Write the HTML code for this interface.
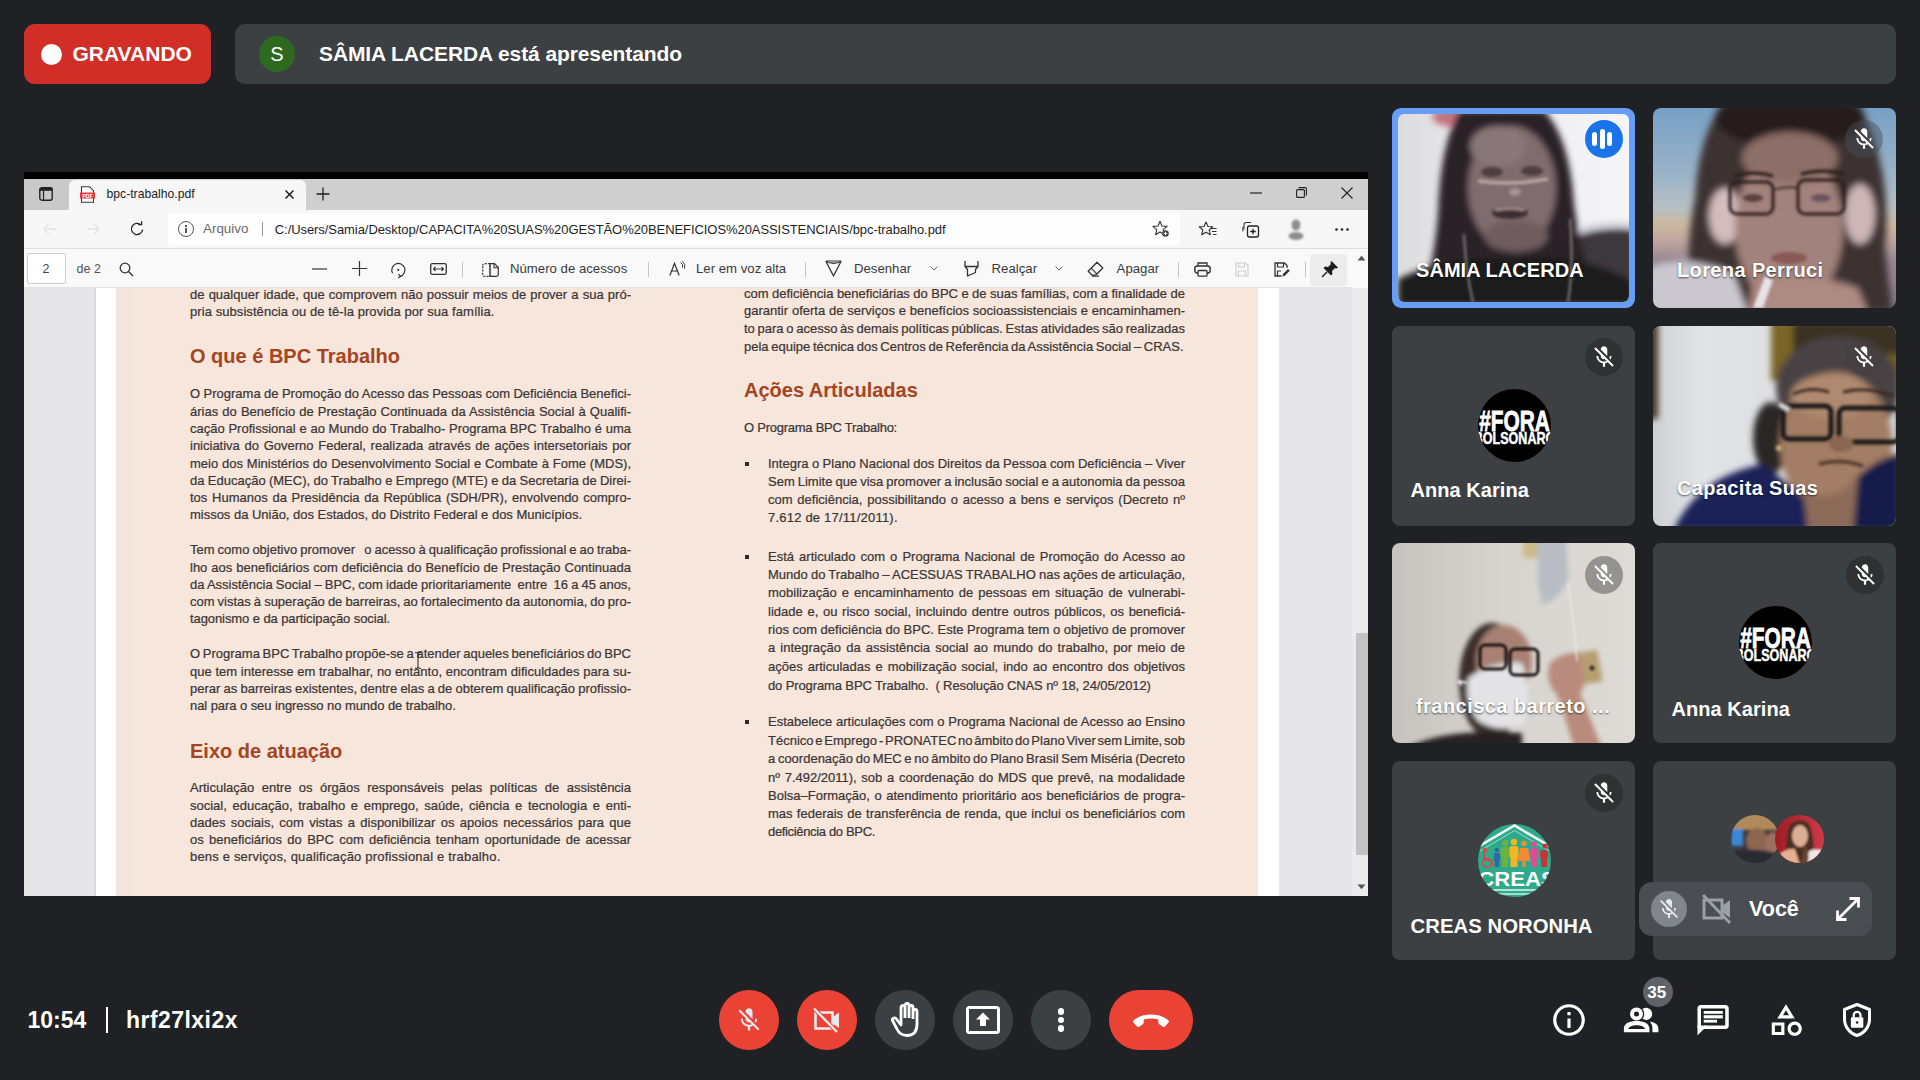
<!DOCTYPE html><html><head><meta charset="utf-8"><title>Meet</title><style>
*{box-sizing:border-box}
html,body{margin:0;padding:0}
body{width:1920px;height:1080px;background:#202124;position:relative;overflow:hidden;font-family:"Liberation Sans",sans-serif}
.a{position:absolute}
.t{position:absolute;white-space:nowrap}
.pl{-webkit-text-stroke:0.22px #3b3535}
svg{position:absolute;overflow:visible}
</style></head><body>
<div class="a" style="left:24px;top:24px;width:187px;height:60px;background:#d02e27;border-radius:11px"></div>
<div class="a" style="left:41px;top:44px;width:21px;height:21px;background:#fff;border-radius:50%"></div>
<div class="t " style="left:72.5px;top:43.42px;font-size:21px;line-height:21px;color:#fff;font-weight:700;">GRAVANDO</div>
<div class="a" style="left:235px;top:24px;width:1661px;height:60px;background:#3c4043;border-radius:10px"></div>
<div class="a" style="left:259px;top:36px;width:36px;height:36px;background:#2d6a1f;border-radius:50%"></div>
<div class="t " style="left:270.2px;top:44.07px;font-size:20px;line-height:20px;color:#fff;font-weight:400;">S</div>
<div class="t " style="left:319px;top:43.42px;font-size:21px;line-height:21px;color:#fff;font-weight:700;letter-spacing:-0.1px">SÂMIA LACERDA está apresentando</div>
<div class="a" style="left:24px;top:172px;width:1344px;height:724px;background:#e6e6e8;overflow:hidden">
</div>
<div class="a" style="left:24px;top:172px;width:1344px;height:7px;background:#000"></div>
<div class="a" style="left:24px;top:179px;width:1344px;height:31px;background:#cfcfcf"></div>
<div class="a" style="left:24px;top:179px;width:45px;height:31px;background:#c9c9c9;border-bottom-right-radius:4px"></div>
<div class="a" style="left:69px;top:180px;width:237px;height:40px;background:#f7f7f7;border-radius:6px 6px 0 0"></div>
<div class="a" style="left:24px;top:210px;width:1344px;height:38px;background:#f7f7f7"></div>
<div class="a" style="left:24px;top:248px;width:1344px;height:1px;background:#dedede"></div>
<div class="a" style="left:24px;top:249px;width:1344px;height:39px;background:#f9f9f9"></div>
<div class="a" style="left:24px;top:287px;width:1328px;height:1px;background:#e2e2e2"></div>
<svg style="left:39px;top:187px" width="14" height="14" viewBox="0 0 14 14"><rect x="0.8" y="0.8" width="12.4" height="12.4" rx="2" fill="none" stroke="#222" stroke-width="1.4"/><rect x="0.8" y="0.8" width="12.4" height="3" fill="#222"/><line x1="4.5" y1="3.5" x2="4.5" y2="13" stroke="#222" stroke-width="1.2"/></svg>
<svg style="left:80px;top:186px" width="15" height="17" viewBox="0 0 15 17"><path d="M1.5 0.7h8l4 4v11.6h-12z" fill="#fff" stroke="#333" stroke-width="1.1"/><rect x="0" y="6.5" width="15" height="6" fill="#e8383d"/><text x="7.5" y="11.6" font-size="5" font-family="Liberation Sans" font-weight="700" fill="#fff" text-anchor="middle">PDF</text></svg>
<div class="t " style="left:106.5px;top:188.17px;font-size:12.2px;line-height:12.2px;color:#222;font-weight:400;">bpc-trabalho.pdf</div>
<svg style="left:285px;top:190px" width="9" height="9" viewBox="0 0 9 9"><path d="M0.5 0.5L8.5 8.5M8.5 0.5L0.5 8.5" stroke="#111" stroke-width="1.4"/></svg>
<svg style="left:316px;top:187px" width="14" height="14" viewBox="0 0 14 14"><path d="M7 0.5V13.5M0.5 7H13.5" stroke="#222" stroke-width="1.3"/></svg>
<svg style="left:1250px;top:192px" width="12" height="2" viewBox="0 0 12 2"><path d="M0 1H12" stroke="#222" stroke-width="1.2"/></svg>
<svg style="left:1296px;top:187px" width="11" height="11" viewBox="0 0 11 11"><rect x="0.6" y="2.6" width="7.8" height="7.8" rx="1" fill="none" stroke="#222" stroke-width="1.1"/><path d="M2.6 0.6H9.4a1 1 0 0 1 1 1V8.4" fill="none" stroke="#222" stroke-width="1.1"/></svg>
<svg style="left:1341px;top:187px" width="12" height="12" viewBox="0 0 12 12"><path d="M0.5 0.5L11.5 11.5M11.5 0.5L0.5 11.5" stroke="#222" stroke-width="1.1"/></svg>
<div class="a" style="left:168px;top:213px;width:1012px;height:32px;background:#fefefe;border-radius:4px"></div>
<svg style="left:43px;top:223px" width="14" height="12" viewBox="0 0 14 12"><path d="M1 6H13M6 1L1 6L6 11" fill="none" stroke="#e3e3e3" stroke-width="1.3"/></svg>
<svg style="left:86px;top:223px" width="14" height="12" viewBox="0 0 14 12"><path d="M1 6H13M8 1L13 6L8 11" fill="none" stroke="#e3e3e3" stroke-width="1.3"/></svg>
<svg style="left:129px;top:221px" width="16" height="16" viewBox="0 0 16 16"><path d="M13.6 8.5A5.6 5.6 0 1 1 11.9 3.9" fill="none" stroke="#222" stroke-width="1.3"/><path d="M9.2 3.6L12.6 3.6L12.6 0.3" fill="none" stroke="#222" stroke-width="1.3"/></svg>
<div class="a" style="left:178px;top:221px;width:16px;height:16px;border:1.2px solid #555;border-radius:50%"></div>
<div class="a" style="left:185.4px;top:225px;width:1.4px;height:1.5px;background:#555"></div>
<div class="a" style="left:185.4px;top:227.5px;width:1.4px;height:5.5px;background:#555"></div>
<div class="t " style="left:203px;top:222.16px;font-size:13.4px;line-height:13.4px;color:#6b6b6b;font-weight:400;">Arquivo</div>
<div class="a" style="left:262px;top:222px;width:1px;height:14px;background:#9a9a9a"></div>
<div class="t " style="left:274.8px;top:222.50px;font-size:13px;line-height:13px;color:#1f1f1f;font-weight:400;letter-spacing:-0.07px">C:/Users/Samia/Desktop/CAPACITA%20SUAS%20GESTÃO%20BENEFICIOS%20ASSISTENCIAIS/bpc-trabalho.pdf</div>
<svg style="left:1152px;top:220px" width="18" height="18" viewBox="0 0 18 18"><path d="M8 1.2L10 6l5.1.4-3.9 3.3 1.2 5-4.4-2.7-4.4 2.7 1.2-5L.9 6.4 6 6z" fill="none" stroke="#333" stroke-width="1.1" stroke-linejoin="round"/><circle cx="13.5" cy="13.5" r="3.3" fill="#444"/><path d="M13.5 11.8V15.2M11.8 13.5H15.2" stroke="#fff" stroke-width="1"/></svg>
<svg style="left:1199px;top:221px" width="18" height="16" viewBox="0 0 18 16"><path d="M7 1L9 5.5l4.8.4-3.6 3.1 1.1 4.7L7 11.2l-4.3 2.5 1.1-4.7L.2 5.9 5 5.5z" fill="none" stroke="#333" stroke-width="1.1" stroke-linejoin="round"/><path d="M12 7.5H17.5M13 10.5H17.5M14 13.5H17.5" stroke="#333" stroke-width="1.1"/></svg>
<svg style="left:1242px;top:220px" width="18" height="18" viewBox="0 0 18 18"><path d="M2 9.5V4.5a2 2 0 0 1 2-2h5" fill="none" stroke="#333" stroke-width="1.1"/><path d="M0.8 11.5V7" fill="none" stroke="#333" stroke-width="1"/><rect x="5.5" y="6" width="11" height="11" rx="2" fill="none" stroke="#222" stroke-width="1.3"/><path d="M11 8.7V14.3M8.2 11.5H13.8" stroke="#222" stroke-width="1.3"/></svg>
<svg style="left:1284px;top:217px" width="24" height="24" viewBox="0 0 24 24"><defs><filter id="pb"><feGaussianBlur stdDeviation="1"/></filter></defs><g filter="url(#pb)"><ellipse cx="12" cy="8" rx="4.5" ry="5.5" fill="#8e8e8e"/><ellipse cx="12" cy="19" rx="7.5" ry="4" fill="#8e8e8e"/></g></svg>
<svg style="left:1335px;top:228px" width="14" height="3" viewBox="0 0 14 3"><circle cx="1.5" cy="1.5" r="1.3" fill="#222"/><circle cx="7" cy="1.5" r="1.3" fill="#222"/><circle cx="12.5" cy="1.5" r="1.3" fill="#222"/></svg>
<div class="a" style="left:27px;top:253px;width:39px;height:31px;background:#fff;border:1px solid #cfcfcf;border-radius:2px"></div>
<div class="t " style="left:42.5px;top:262.92px;font-size:12.5px;line-height:12.5px;color:#444;font-weight:400;">2</div>
<div class="t " style="left:76.5px;top:262.92px;font-size:12.5px;line-height:12.5px;color:#555;font-weight:400;">de 2</div>
<svg style="left:119px;top:262px" width="15" height="15" viewBox="0 0 15 15"><circle cx="6" cy="6" r="4.8" fill="none" stroke="#333" stroke-width="1.3"/><path d="M9.5 9.5L14 14" stroke="#333" stroke-width="1.4"/></svg>
<svg style="left:312px;top:268px" width="15" height="2" viewBox="0 0 15 2"><path d="M0 1H15" stroke="#333" stroke-width="1.2"/></svg>
<svg style="left:352px;top:261px" width="15" height="15" viewBox="0 0 15 15"><path d="M7.5 0V15M0 7.5H15" stroke="#333" stroke-width="1.2"/></svg>
<svg style="left:390px;top:262px" width="17" height="16" viewBox="0 0 17 16"><path d="M2.6 11.2A6.6 6.6 0 1 1 10.2 14.4" fill="none" stroke="#333" stroke-width="1.2"/><path d="M8.4 12.2L10.6 14.5L8.2 16" fill="none" stroke="#333" stroke-width="1.2"/><circle cx="8.3" cy="7.8" r="1.1" fill="#333"/></svg>
<svg style="left:430px;top:263px" width="17" height="12" viewBox="0 0 17 12"><rect x="0.7" y="0.7" width="15.6" height="10.6" rx="1.5" fill="none" stroke="#333" stroke-width="1.3"/><path d="M3.5 6H13.5M5.5 4L3.5 6L5.5 8M11.5 4L13.5 6L11.5 8" fill="none" stroke="#333" stroke-width="1.1"/></svg>
<div class="a" style="left:462.4px;top:262px;width:1px;height:15px;background:#c4c4c4"></div>
<div class="a" style="left:647.5px;top:262px;width:1px;height:15px;background:#c4c4c4"></div>
<div class="a" style="left:805.3px;top:262px;width:1px;height:15px;background:#c4c4c4"></div>
<div class="a" style="left:1178.2px;top:262px;width:1px;height:15px;background:#c4c4c4"></div>
<div class="a" style="left:1305.4px;top:262px;width:1px;height:15px;background:#c4c4c4"></div>
<svg style="left:482px;top:263px" width="17" height="14" viewBox="0 0 17 14"><path d="M0.7 3.3V11.5a1.8 1.8 0 0 0 1.8 1.8H8V0.7H2.5a1.8 1.8 0 0 0-1.8 1.8" fill="none" stroke="#333" stroke-width="1.2" stroke-dasharray="2 1.2"/><path d="M8 0.7H12.5L16.3 4.5V11.5a1.8 1.8 0 0 1-1.8 1.8H8z" fill="none" stroke="#333" stroke-width="1.2"/><path d="M12 0.8V4.8H16.2" fill="none" stroke="#333" stroke-width="1.1"/></svg>
<div class="t " style="left:510px;top:262.33px;font-size:13.2px;line-height:13.2px;color:#3a3a3a;font-weight:400;">Número de acessos</div>
<svg style="left:669px;top:261px" width="17" height="15" viewBox="0 0 17 15"><path d="M0.8 14.5L5.5 2.5L10.2 14.5M2.6 10H8.4" fill="none" stroke="#333" stroke-width="1.2"/><path d="M11.5 1.5Q14.5 3 13.5 6.5M13.5 0.5Q17 3 15.5 7.5" fill="none" stroke="#333" stroke-width="1"/></svg>
<div class="t " style="left:696px;top:262.33px;font-size:13.2px;line-height:13.2px;color:#3a3a3a;font-weight:400;">Ler em voz alta</div>
<svg style="left:825px;top:260px" width="17" height="17" viewBox="0 0 17 17"><path d="M1 1.5Q8.5 5 16 1.5L8.5 16z" fill="none" stroke="#333" stroke-width="1.3" stroke-linejoin="round"/><path d="M1 1L16 1" stroke="#333" stroke-width="1"/></svg>
<div class="t " style="left:854px;top:262.33px;font-size:13.2px;line-height:13.2px;color:#3a3a3a;font-weight:400;">Desenhar</div>
<svg style="left:930px;top:266px" width="8" height="5" viewBox="0 0 8 5"><path d="M0.5 0.5L4 4L7.5 0.5" fill="none" stroke="#666" stroke-width="1"/></svg>
<svg style="left:964px;top:260px" width="15" height="17" viewBox="0 0 15 17"><path d="M1 1V6.5L3.5 9.5V16L11.5 12.5V9.5L14 6.5V1M1 6.5H14" fill="none" stroke="#333" stroke-width="1.3" stroke-linejoin="round"/></svg>
<div class="t " style="left:991.6px;top:262.33px;font-size:13.2px;line-height:13.2px;color:#3a3a3a;font-weight:400;">Realçar</div>
<svg style="left:1055px;top:266px" width="8" height="5" viewBox="0 0 8 5"><path d="M0.5 0.5L4 4L7.5 0.5" fill="none" stroke="#666" stroke-width="1"/></svg>
<svg style="left:1087px;top:261px" width="17" height="16" viewBox="0 0 17 16"><path d="M10 1.2L15.8 7L8.6 14.2H5.2L1.2 10.2z" fill="none" stroke="#333" stroke-width="1.3" stroke-linejoin="round"/><path d="M4.2 7.2L9.8 12.8M5 15.2H12" stroke="#333" stroke-width="1.2"/></svg>
<div class="t " style="left:1116.6px;top:262.33px;font-size:13.2px;line-height:13.2px;color:#3a3a3a;font-weight:400;">Apagar</div>
<svg style="left:1194px;top:262px" width="17" height="15" viewBox="0 0 17 15"><path d="M4 4V1H13V4" fill="none" stroke="#333" stroke-width="1.3"/><rect x="0.8" y="4" width="15.4" height="7" rx="2.5" fill="none" stroke="#333" stroke-width="1.4"/><rect x="4" y="8.5" width="9" height="5.7" rx="1" fill="#f9f9f9" stroke="#333" stroke-width="1.3"/></svg>
<svg style="left:1235px;top:262px" width="14" height="15" viewBox="0 0 14 15"><path d="M1 1H10.5L13 3.5V14H1z" fill="none" stroke="#cfcfcf" stroke-width="1.2"/><path d="M3.5 1V5H9.5V1M3.5 14V9H10.5V14" fill="none" stroke="#cfcfcf" stroke-width="1.1"/></svg>
<svg style="left:1274px;top:262px" width="16" height="16" viewBox="0 0 16 16"><path d="M7.5 14H1V1H10.5L13 3.5V6" fill="none" stroke="#333" stroke-width="1.3"/><path d="M3.5 1V5H9.5V1M3.5 14V9H7" fill="none" stroke="#333" stroke-width="1.2"/><path d="M8.5 14.5L9 12L14 7L15.8 8.8L10.8 13.8z" fill="#333"/></svg>
<div class="a" style="left:1310px;top:254px;width:37px;height:32px;background:#ececec;border-radius:4px"></div>
<svg style="left:1321px;top:260px" width="18" height="18" viewBox="0 0 18 18"><path d="M10.5 1L17 7.5L15.5 8.5L13.8 8.2L11 11L11.4 14L10 15.5L2.5 8L4 6.6L7 7L9.8 4.2L9.5 2.5z" fill="#1e1e1e"/><path d="M6 12L1 17" stroke="#1e1e1e" stroke-width="1.5"/></svg>
<div class="a" style="left:1352px;top:288px;width:16px;height:608px;background:#ebebed"></div>
<svg style="left:1357px;top:255px" width="9" height="6" viewBox="0 0 9 6"><path d="M0.5 5.5L4.5 0.8L8.5 5.5z" fill="#555"/></svg>
<svg style="left:1357px;top:884px" width="9" height="6" viewBox="0 0 9 6"><path d="M0.5 0.5L4.5 5.2L8.5 0.5z" fill="#555"/></svg>
<div class="a" style="left:1355.5px;top:633px;width:12px;height:222px;background:#c3c3c3"></div>
<div class="a" style="left:93px;top:288px;width:3px;height:608px;background:linear-gradient(90deg,#e6e6e8,#d4d4d6)"></div>
<div class="a" style="left:96px;top:288px;width:1183px;height:608px;background:#fff"></div>
<div class="a" style="left:116px;top:288px;width:1142px;height:608px;background:linear-gradient(90deg,#efe5dc 0,#f6e6dc 20px,#f6e6dc 100%)"></div>
<div class="t pl" id="pl0" data-w="441" data-j="1" style="left:190px;top:287.80px;font-size:13px;line-height:13px;color:#3b3535;word-spacing:0.557px;letter-spacing:0.000px"><span>de qualquer idade, que comprovem não possuir meios de prover a sua pró-</span></div>
<div class="t pl" id="pl1" data-w="304.5" data-j="0" style="left:190px;top:305.00px;font-size:13px;line-height:13px;color:#3b3535;word-spacing:0.000px;letter-spacing:0.072px"><span>pria subsistência ou de tê-la provida por sua família.</span></div>
<div class="t pl" id="pl2" data-w="441" data-j="1" style="left:190px;top:386.90px;font-size:13px;line-height:13px;color:#3b3535;word-spacing:-0.194px;letter-spacing:0.000px"><span>O Programa de Promoção do Acesso das Pessoas com Deficiência Benefici-</span></div>
<div class="t pl" id="pl3" data-w="441" data-j="1" style="left:190px;top:404.50px;font-size:13px;line-height:13px;color:#3b3535;word-spacing:0.525px;letter-spacing:0.000px"><span>árias do Benefício de Prestação Continuada da Assistência Social à Qualifi-</span></div>
<div class="t pl" id="pl4" data-w="441" data-j="1" style="left:190px;top:421.80px;font-size:13px;line-height:13px;color:#3b3535;word-spacing:0.149px;letter-spacing:0.000px"><span>cação Profissional e ao Mundo do Trabalho- Programa BPC Trabalho é uma</span></div>
<div class="t pl" id="pl5" data-w="441" data-j="1" style="left:190px;top:439.30px;font-size:13px;line-height:13px;color:#3b3535;word-spacing:1.066px;letter-spacing:0.000px"><span>iniciativa do Governo Federal, realizada através de ações intersetoriais por</span></div>
<div class="t pl" id="pl6" data-w="441" data-j="1" style="left:190px;top:456.80px;font-size:13px;line-height:13px;color:#3b3535;word-spacing:0.244px;letter-spacing:0.000px"><span>meio dos Ministérios do Desenvolvimento Social e Combate à Fome (MDS),</span></div>
<div class="t pl" id="pl7" data-w="441" data-j="1" style="left:190px;top:474.00px;font-size:13px;line-height:13px;color:#3b3535;word-spacing:-0.281px;letter-spacing:0.000px"><span>da Educação (MEC), do Trabalho e Emprego (MTE) e da Secretaria de Direi-</span></div>
<div class="t pl" id="pl8" data-w="441" data-j="1" style="left:190px;top:491.30px;font-size:13px;line-height:13px;color:#3b3535;word-spacing:1.111px;letter-spacing:0.000px"><span>tos Humanos da Presidência da República (SDH/PR), envolvendo compro-</span></div>
<div class="t pl" id="pl9" data-w="392" data-j="0" style="left:190px;top:508.40px;font-size:13px;line-height:13px;color:#3b3535;word-spacing:0.000px;letter-spacing:-0.016px"><span>missos da União, dos Estados, do Distrito Federal e dos Municípios.</span></div>
<div class="t pl" id="pl10" data-w="441" data-j="1" style="left:190px;top:543.40px;font-size:13px;line-height:13px;color:#3b3535;word-spacing:-0.595px;letter-spacing:0.000px"><span>Tem como objetivo promover &nbsp; o acesso à qualificação profissional e ao traba-</span></div>
<div class="t pl" id="pl11" data-w="441" data-j="1" style="left:190px;top:560.80px;font-size:13px;line-height:13px;color:#3b3535;word-spacing:0.340px;letter-spacing:0.000px"><span>lho aos beneficiários com deficiência do Benefício de Prestação Continuada</span></div>
<div class="t pl" id="pl12" data-w="441" data-j="1" style="left:190px;top:577.90px;font-size:13px;line-height:13px;color:#3b3535;word-spacing:-0.451px;letter-spacing:0.000px"><span>da Assistência Social – BPC, com idade prioritariamente &nbsp;entre &nbsp;16 a 45 anos,</span></div>
<div class="t pl" id="pl13" data-w="441" data-j="1" style="left:190px;top:595.00px;font-size:13px;line-height:13px;color:#3b3535;word-spacing:-0.573px;letter-spacing:0.000px"><span>com vistas à superação de barreiras, ao fortalecimento da autonomia, do pro-</span></div>
<div class="t pl" id="pl14" data-w="200" data-j="0" style="left:190px;top:612.30px;font-size:13px;line-height:13px;color:#3b3535;word-spacing:0.000px;letter-spacing:-0.087px"><span>tagonismo e da participação social.</span></div>
<div class="t pl" id="pl15" data-w="441" data-j="1" style="left:190px;top:647.40px;font-size:13px;line-height:13px;color:#3b3535;word-spacing:-0.922px;letter-spacing:0.000px"><span>O Programa BPC Trabalho propõe-se a atender aqueles beneficiários do BPC</span></div>
<div class="t pl" id="pl16" data-w="441" data-j="1" style="left:190px;top:664.60px;font-size:13px;line-height:13px;color:#3b3535;word-spacing:0.091px;letter-spacing:0.000px"><span>que tem interesse em trabalhar, no entanto, encontram dificuldades para su-</span></div>
<div class="t pl" id="pl17" data-w="441" data-j="1" style="left:190px;top:681.70px;font-size:13px;line-height:13px;color:#3b3535;word-spacing:-0.412px;letter-spacing:0.000px"><span>perar as barreiras existentes, dentre elas a de obterem qualificação profissio-</span></div>
<div class="t pl" id="pl18" data-w="265.7" data-j="0" style="left:190px;top:699.00px;font-size:13px;line-height:13px;color:#3b3535;word-spacing:0.000px;letter-spacing:-0.070px"><span>nal para o seu ingresso no mundo de trabalho.</span></div>
<div class="t pl" id="pl19" data-w="441" data-j="1" style="left:190px;top:780.80px;font-size:13px;line-height:13px;color:#3b3535;word-spacing:3.818px;letter-spacing:0.000px"><span>Articulação entre os órgãos responsáveis pelas políticas de assistência</span></div>
<div class="t pl" id="pl20" data-w="441" data-j="1" style="left:190px;top:798.50px;font-size:13px;line-height:13px;color:#3b3535;word-spacing:2.039px;letter-spacing:0.000px"><span>social, educação, trabalho e emprego, saúde, ciência e tecnologia e enti-</span></div>
<div class="t pl" id="pl21" data-w="441" data-j="1" style="left:190px;top:815.80px;font-size:13px;line-height:13px;color:#3b3535;word-spacing:1.683px;letter-spacing:0.000px"><span>dades sociais, com vistas a disponibilizar os apoios necessários para que</span></div>
<div class="t pl" id="pl22" data-w="441" data-j="1" style="left:190px;top:833.30px;font-size:13px;line-height:13px;color:#3b3535;word-spacing:1.707px;letter-spacing:0.000px"><span>os beneficiários do BPC com deficiência tenham oportunidade de acessar</span></div>
<div class="t pl" id="pl23" data-w="310.5" data-j="0" style="left:190px;top:850.30px;font-size:13px;line-height:13px;color:#3b3535;word-spacing:0.000px;letter-spacing:0.183px"><span>bens e serviços, qualificação profissional e trabalho.</span></div>
<div class="t pl" id="pl24" data-w="441" data-j="1" style="left:744px;top:286.70px;font-size:13px;line-height:13px;color:#3b3535;word-spacing:-0.164px;letter-spacing:0.000px"><span>com deficiência beneficiárias do BPC e de suas famílias, com a finalidade de</span></div>
<div class="t pl" id="pl25" data-w="441" data-j="1" style="left:744px;top:304.40px;font-size:13px;line-height:13px;color:#3b3535;word-spacing:0.207px;letter-spacing:0.000px"><span>garantir oferta de serviços e benefícios socioassistenciais e encaminhamen-</span></div>
<div class="t pl" id="pl26" data-w="441" data-j="1" style="left:744px;top:322.20px;font-size:13px;line-height:13px;color:#3b3535;word-spacing:-0.902px;letter-spacing:0.000px"><span>to para o acesso às demais políticas públicas. Estas atividades são realizadas</span></div>
<div class="t pl" id="pl27" data-w="439.5" data-j="1" style="left:744px;top:339.60px;font-size:13px;line-height:13px;color:#3b3535;word-spacing:-0.973px;letter-spacing:0.000px"><span>pela equipe técnica dos Centros de Referência da Assistência Social – CRAS.</span></div>
<div class="t pl" id="pl28" data-w="153" data-j="0" style="left:744px;top:421.10px;font-size:13px;line-height:13px;color:#3b3535;word-spacing:0.000px;letter-spacing:-0.249px"><span>O Programa BPC Trabalho:</span></div>
<div class="t pl" id="pl29" data-w="417" data-j="1" style="left:768px;top:457.30px;font-size:13px;line-height:13px;color:#3b3535;word-spacing:-0.170px;letter-spacing:0.000px"><span>Integra o Plano Nacional dos Direitos da Pessoa com Deficiência – Viver</span></div>
<div class="t pl" id="pl30" data-w="417" data-j="1" style="left:768px;top:475.10px;font-size:13px;line-height:13px;color:#3b3535;word-spacing:-0.599px;letter-spacing:0.000px"><span>Sem Limite que visa promover a inclusão social e a autonomia da pessoa</span></div>
<div class="t pl" id="pl31" data-w="417" data-j="1" style="left:768px;top:492.90px;font-size:13px;line-height:13px;color:#3b3535;word-spacing:1.194px;letter-spacing:0.000px"><span>com deficiência, possibilitando o acesso a bens e serviços (Decreto nº</span></div>
<div class="t pl" id="pl32" data-w="129.70000000000005" data-j="0" style="left:768px;top:510.70px;font-size:13px;line-height:13px;color:#3b3535;word-spacing:0.000px;letter-spacing:0.210px"><span>7.612 de 17/11/2011).</span></div>
<div class="t pl" id="pl33" data-w="417" data-j="1" style="left:768px;top:549.70px;font-size:13px;line-height:13px;color:#3b3535;word-spacing:1.450px;letter-spacing:0.000px"><span>Está articulado com o Programa Nacional de Promoção do Acesso ao</span></div>
<div class="t pl" id="pl34" data-w="417" data-j="1" style="left:768px;top:567.90px;font-size:13px;line-height:13px;color:#3b3535;word-spacing:-0.450px;letter-spacing:0.000px"><span>Mundo do Trabalho – ACESSUAS TRABALHO nas ações de articulação,</span></div>
<div class="t pl" id="pl35" data-w="417" data-j="1" style="left:768px;top:586.10px;font-size:13px;line-height:13px;color:#3b3535;word-spacing:1.449px;letter-spacing:0.000px"><span>mobilização e encaminhamento de pessoas em situação de vulnerabi-</span></div>
<div class="t pl" id="pl36" data-w="417" data-j="1" style="left:768px;top:604.60px;font-size:13px;line-height:13px;color:#3b3535;word-spacing:1.087px;letter-spacing:0.000px"><span>lidade e, ou risco social, incluindo dentre outros públicos, os beneficiá-</span></div>
<div class="t pl" id="pl37" data-w="417" data-j="1" style="left:768px;top:623.00px;font-size:13px;line-height:13px;color:#3b3535;word-spacing:-0.058px;letter-spacing:0.000px"><span>rios com deficiência do BPC. Este Programa tem o objetivo de promover</span></div>
<div class="t pl" id="pl38" data-w="417" data-j="1" style="left:768px;top:641.40px;font-size:13px;line-height:13px;color:#3b3535;word-spacing:1.512px;letter-spacing:0.000px"><span>a integração da assistência social ao mundo do trabalho, por meio de</span></div>
<div class="t pl" id="pl39" data-w="417" data-j="1" style="left:768px;top:660.00px;font-size:13px;line-height:13px;color:#3b3535;word-spacing:1.368px;letter-spacing:0.000px"><span>ações articuladas e mobilização social, indo ao encontro dos objetivos</span></div>
<div class="t pl" id="pl40" data-w="382.70000000000005" data-j="0" style="left:768px;top:678.50px;font-size:13px;line-height:13px;color:#3b3535;word-spacing:0.000px;letter-spacing:-0.116px"><span>do Programa BPC Trabalho. &nbsp;( Resolução CNAS nº 18, 24/05/2012)</span></div>
<div class="t pl" id="pl41" data-w="417" data-j="1" style="left:768px;top:714.90px;font-size:13px;line-height:13px;color:#3b3535;word-spacing:0.085px;letter-spacing:0.000px"><span>Estabelece articulações com o Programa Nacional de Acesso ao Ensino</span></div>
<div class="t pl" id="pl42" data-w="417" data-j="1" style="left:768px;top:733.50px;font-size:13px;line-height:13px;color:#3b3535;word-spacing:-1.819px;letter-spacing:0.000px"><span>Técnico e Emprego - PRONATEC no âmbito do Plano Viver sem Limite, sob</span></div>
<div class="t pl" id="pl43" data-w="417" data-j="1" style="left:768px;top:752.00px;font-size:13px;line-height:13px;color:#3b3535;word-spacing:-0.958px;letter-spacing:0.000px"><span>a coordenação do MEC e no âmbito do Plano Brasil Sem Miséria (Decreto</span></div>
<div class="t pl" id="pl44" data-w="417" data-j="1" style="left:768px;top:770.50px;font-size:13px;line-height:13px;color:#3b3535;word-spacing:1.066px;letter-spacing:0.000px"><span>nº 7.492/2011), sob a coordenação do MDS que prevê, na modalidade</span></div>
<div class="t pl" id="pl45" data-w="417" data-j="1" style="left:768px;top:788.60px;font-size:13px;line-height:13px;color:#3b3535;word-spacing:0.935px;letter-spacing:0.000px"><span>Bolsa–Formação, o atendimento prioritário aos beneficiários de progra-</span></div>
<div class="t pl" id="pl46" data-w="417" data-j="1" style="left:768px;top:806.70px;font-size:13px;line-height:13px;color:#3b3535;word-spacing:0.655px;letter-spacing:0.000px"><span>mas federais de transferência de renda, que inclui os beneficiários com</span></div>
<div class="t pl" id="pl47" data-w="107" data-j="0" style="left:768px;top:824.80px;font-size:13px;line-height:13px;color:#3b3535;word-spacing:0.000px;letter-spacing:-0.340px"><span>deficiência do BPC.</span></div>
<div class="t" style="left:190px;top:346.27px;font-size:20px;line-height:20px;color:#a6441f;font-weight:700">O que é BPC Trabalho</div>
<div class="t" style="left:190px;top:740.67px;font-size:20px;line-height:20px;color:#a6441f;font-weight:700">Eixo de atuação</div>
<div class="t" style="left:744px;top:380.27px;font-size:20px;line-height:20px;color:#a6441f;font-weight:700">Ações Articuladas</div>
<div class="a" style="left:745px;top:461.8px;width:4.4px;height:4.4px;background:#2a2a2a"></div>
<div class="a" style="left:745px;top:554.6px;width:4.4px;height:4.4px;background:#2a2a2a"></div>
<div class="a" style="left:745px;top:719.6px;width:4.4px;height:4.4px;background:#2a2a2a"></div>
<svg style="left:414px;top:652px" width="8" height="17" viewBox="0 0 8 17"><path d="M1 0.7H3.2Q4 0.7 4 2V15Q4 16.3 3.2 16.3H1M7 0.7H4.8Q4 0.7 4 2M7 16.3H4.8Q4 16.3 4 15" fill="none" stroke="#222" stroke-width="1"/></svg>
<div class="a" style="left:1392px;top:108px;width:243px;height:200px;background:#669df6;border-radius:9px"></div>
<div class="a" style="left:1398px;top:114px;width:231px;height:188px;border-radius:6px;overflow:hidden"><svg style="left:0;top:0" width="231" height="188" viewBox="0 0 231 188"><defs><linearGradient id="sbg" x1="0" x2="1" y1="0" y2="0"><stop offset="0" stop-color="#dcdcde"/><stop offset="0.35" stop-color="#ebebed"/><stop offset="1" stop-color="#f5f5f7"/></linearGradient><filter id="bl3" x="-20%" y="-20%" width="140%" height="140%"><feGaussianBlur stdDeviation="3"/></filter><filter id="bl1" x="-30%" y="-30%" width="160%" height="160%"><feGaussianBlur stdDeviation="1.8"/></filter></defs><rect width="231" height="188" fill="url(#sbg)"/><g filter="url(#bl3)"><ellipse cx="56" cy="3" rx="22" ry="10" fill="#c47580"/><path d="M178 122Q205 112 236 116V192H170z" fill="#3d393d"/><path d="M178 118Q205 108 236 112" stroke="#c9c9d2" stroke-width="5" fill="none"/><path d="M62 -4H146Q172 25 176 90Q182 140 205 192H22Q36 150 40 100Q42 30 62 -4z" fill="#2a2327"/><ellipse cx="114" cy="74" rx="44" ry="62" fill="#806c6e"/><ellipse cx="100" cy="32" rx="28" ry="20" fill="#8a7779"/><ellipse cx="118" cy="122" rx="32" ry="16" fill="#6f5c5e"/><path d="M0 165Q55 138 115 146Q180 136 236 168V192H0z" fill="#1f1a1d"/></g><g filter="url(#bl1)"><ellipse cx="94" cy="58" rx="11" ry="5" fill="#4e3e40"/><ellipse cx="134" cy="57" rx="11" ry="5" fill="#4e3e40"/><path d="M80 67Q112 72 150 65" stroke="#c9bab4" stroke-width="2.5" fill="none"/><ellipse cx="117" cy="78" rx="6" ry="4" fill="#a59294"/><ellipse cx="112" cy="99" rx="18" ry="6" fill="#3e2e30"/><path d="M98 96Q112 93 126 96" stroke="#b9a6a4" stroke-width="2" fill="none"/><path d="M66 120Q68 160 75 188M172 105Q176 150 170 188" stroke="#bcb4b4" stroke-width="1.3" fill="none"/></g></svg></div>
<div class="a" style="left:1585px;top:120px;width:38px;height:38px;border-radius:50%;background:#1a73e8"></div>
<div class="a" style="left:1592.0px;top:132.0px;width:5px;height:14px;border-radius:3px;background:#fff"></div>
<div class="a" style="left:1599.5px;top:129.0px;width:5px;height:20px;border-radius:3px;background:#fff"></div>
<div class="a" style="left:1607.0px;top:132.0px;width:5px;height:14px;border-radius:3px;background:#fff"></div>
<div class="t " style="left:1416px;top:260.07px;font-size:20px;line-height:20px;color:#fff;font-weight:700;text-shadow:0 1px 2px rgba(0,0,0,.6);letter-spacing:0.05px">SÂMIA LACERDA</div>
<div class="a" style="left:1653px;top:108px;width:243px;height:200px;border-radius:8px;overflow:hidden"><svg style="left:0;top:0" width="243" height="200" viewBox="0 0 243 200"><defs><linearGradient id="lbg" x1="0" x2="0" y1="0" y2="1"><stop offset="0" stop-color="#78a0c4"/><stop offset="0.35" stop-color="#9cb4c8"/><stop offset="0.5" stop-color="#b8bfc4"/><stop offset="0.58" stop-color="#cbb9a0"/><stop offset="0.66" stop-color="#c0a69e"/><stop offset="0.76" stop-color="#9a8894"/><stop offset="1" stop-color="#857a8c"/></linearGradient><filter id="bl4" x="-20%" y="-20%" width="140%" height="140%"><feGaussianBlur stdDeviation="3.5"/></filter><filter id="bl1b" x="-30%" y="-30%" width="160%" height="160%"><feGaussianBlur stdDeviation="1.5"/></filter></defs><rect width="243" height="200" fill="url(#lbg)"/><g filter="url(#bl4)"><path d="M70 -5H205Q240 60 232 140Q236 180 240 205H40Q30 150 42 90Q45 30 70 -5z" fill="#3c3331"/><ellipse cx="137" cy="10" rx="75" ry="30" fill="#251e1c"/><ellipse cx="72" cy="108" rx="16" ry="28" fill="#d3bcbd"/><ellipse cx="207" cy="106" rx="15" ry="30" fill="#cdb6b8"/><ellipse cx="136" cy="120" rx="54" ry="80" fill="#a2827c"/><ellipse cx="137" cy="50" rx="48" ry="26" fill="#8d6e68"/><path d="M-5 160Q30 145 80 165L95 205H-5z" fill="#cbc8cf"/><path d="M100 175Q150 160 205 180L215 205H95z" fill="#ad8a82"/></g><g filter="url(#bl1b)"><rect x="77" y="74" width="43" height="32" rx="7" fill="none" stroke="#2b1d1a" stroke-width="3"/><rect x="145" y="72" width="46" height="34" rx="7" fill="none" stroke="#2b1d1a" stroke-width="3"/><path d="M120 82Q132 78 145 80" stroke="#3a2a22" stroke-width="2" fill="none"/><path d="M82 68Q100 62 120 68M148 66Q170 60 192 66" stroke="#2a1c18" stroke-width="3" fill="none"/><ellipse cx="136" cy="150" rx="18" ry="6" fill="#8a5955"/><ellipse cx="100" cy="90" rx="10" ry="4" fill="#5a4040"/><ellipse cx="168" cy="90" rx="10" ry="4" fill="#6a5560"/><path d="M100 200L112 168L120 172L110 200z" fill="#e6e2e6"/></g></svg></div>
<div class="a" style="left:1845.0px;top:119.5px;width:38px;height:38px;border-radius:50%;background:rgba(70,80,90,0.45)"></div>
<svg style="left:1851.0px;top:125.5px" width="26" height="26" viewBox="0 0 24 24"><path d="M19 11h-1.7c0 .74-.16 1.43-.43 2.05l1.23 1.23c.56-.98.9-2.09.9-3.28zm-4.02.17c0-.06.02-.11.02-.17V5c0-1.66-1.34-3-3-3S9 3.34 9 5v.18l5.98 5.99zM4.27 3L3 4.27l6.01 6.01V11c0 1.66 1.33 3 2.99 3 .22 0 .44-.03.65-.08l1.66 1.66c-.71.33-1.5.52-2.31.52-2.76 0-5.3-2.1-5.3-5.1H5c0 3.41 2.72 6.23 6 6.72V21h2v-3.28c.91-.13 1.77-.45 2.54-.9L19.73 21 21 19.73 4.27 3z" fill="#fff"/></svg>
<div class="t " style="left:1677px;top:260.07px;font-size:20px;line-height:20px;color:#fff;font-weight:700;text-shadow:0 1px 2px rgba(0,0,0,.6);letter-spacing:0.38px">Lorena Perruci</div>
<div class="a" style="left:1392px;top:326px;width:243px;height:200px;background:#3c4043;border-radius:8px;overflow:hidden">
</div>
<div class="a" style="left:1478px;top:389px;width:73px;height:73px;border-radius:50%;background:#000;overflow:hidden"><svg style="left:0;top:0" width="73" height="73" viewBox="0 0 73 73"><text x="0" y="0" font-family="Liberation Sans" font-weight="700" font-size="29" fill="#fff" stroke="#fff" stroke-width="0.8" text-anchor="middle" transform="translate(36.5,42) scale(0.72,1)">#FORA</text><text x="0" y="0" font-family="Liberation Sans" font-weight="700" font-size="16.5" fill="#fff" stroke="#fff" stroke-width="0.5" text-anchor="middle" transform="translate(36.5,55) scale(0.76,1)">BOLSONARO</text></svg></div>
<div class="a" style="left:1584.5px;top:337.5px;width:38px;height:38px;border-radius:50%;background:#2f3133"></div>
<svg style="left:1590.5px;top:343.5px" width="26" height="26" viewBox="0 0 24 24"><path d="M19 11h-1.7c0 .74-.16 1.43-.43 2.05l1.23 1.23c.56-.98.9-2.09.9-3.28zm-4.02.17c0-.06.02-.11.02-.17V5c0-1.66-1.34-3-3-3S9 3.34 9 5v.18l5.98 5.99zM4.27 3L3 4.27l6.01 6.01V11c0 1.66 1.33 3 2.99 3 .22 0 .44-.03.65-.08l1.66 1.66c-.71.33-1.5.52-2.31.52-2.76 0-5.3-2.1-5.3-5.1H5c0 3.41 2.72 6.23 6 6.72V21h2v-3.28c.91-.13 1.77-.45 2.54-.9L19.73 21 21 19.73 4.27 3z" fill="#fff"/></svg>
<div class="t " style="left:1410.5px;top:480.07px;font-size:20px;line-height:20px;color:#fff;font-weight:700;letter-spacing:0.05px">Anna Karina</div>
<div class="a" style="left:1653px;top:326px;width:243px;height:200px;border-radius:8px;overflow:hidden"><svg style="left:0;top:0" width="243" height="200" viewBox="0 0 243 200"><defs><linearGradient id="cbg" x1="0" x2="1" y1="0" y2="0"><stop offset="0" stop-color="#cfd0d4"/><stop offset="0.2" stop-color="#e2e3e6"/><stop offset="0.6" stop-color="#dddee2"/><stop offset="1" stop-color="#d6d7db"/></linearGradient><filter id="bl5" x="-20%" y="-20%" width="140%" height="140%"><feGaussianBlur stdDeviation="3"/></filter><filter id="bl1c" x="-30%" y="-30%" width="160%" height="160%"><feGaussianBlur stdDeviation="1.4"/></filter></defs><rect width="243" height="200" fill="url(#cbg)"/><g filter="url(#bl5)"><rect x="-5" y="-5" width="10" height="98" fill="#403428"/><rect x="118" y="-5" width="22" height="60" fill="#7a6526"/><rect x="140" y="-5" width="110" height="40" fill="#3b3222"/><rect x="212" y="28" width="40" height="25" fill="#6e5e26"/><ellipse cx="185" cy="62" rx="62" ry="52" fill="#494344"/><ellipse cx="118" cy="112" rx="18" ry="36" fill="#2a2525"/><ellipse cx="183" cy="118" rx="56" ry="72" fill="#a37d65"/><ellipse cx="178" cy="70" rx="40" ry="22" fill="#b08a70"/><path d="M20 205Q45 150 110 138L150 170L160 205z" fill="#1c2358"/><path d="M150 160Q175 185 205 150L243 128V205H155z" fill="#8c6a58"/><path d="M200 205L205 150Q228 130 248 128V205z" fill="#181f4a"/></g><g filter="url(#bl1c)"><rect x="130" y="80" width="48" height="33" rx="6" fill="none" stroke="#1b1614" stroke-width="5"/><rect x="186" y="82" width="60" height="34" rx="6" fill="none" stroke="#1b1614" stroke-width="5"/><path d="M126 78L136 84" stroke="#e0e0e0" stroke-width="4"/><path d="M140 68Q158 60 176 66M190 66Q215 60 240 70" stroke="#3a2a22" stroke-width="3" fill="none"/><path d="M166 138Q188 132 210 140" stroke="#5a3c36" stroke-width="4" fill="none"/><ellipse cx="188" cy="118" rx="12" ry="8" fill="#8a6652"/><circle cx="126" cy="122" r="3" fill="#c8b070"/></g></svg></div>
<div class="a" style="left:1845.0px;top:338.0px;width:38px;height:38px;border-radius:50%;background:rgba(60,60,60,0.3)"></div>
<svg style="left:1851.0px;top:344.0px" width="26" height="26" viewBox="0 0 24 24"><path d="M19 11h-1.7c0 .74-.16 1.43-.43 2.05l1.23 1.23c.56-.98.9-2.09.9-3.28zm-4.02.17c0-.06.02-.11.02-.17V5c0-1.66-1.34-3-3-3S9 3.34 9 5v.18l5.98 5.99zM4.27 3L3 4.27l6.01 6.01V11c0 1.66 1.33 3 2.99 3 .22 0 .44-.03.65-.08l1.66 1.66c-.71.33-1.5.52-2.31.52-2.76 0-5.3-2.1-5.3-5.1H5c0 3.41 2.72 6.23 6 6.72V21h2v-3.28c.91-.13 1.77-.45 2.54-.9L19.73 21 21 19.73 4.27 3z" fill="#fff"/></svg>
<div class="t " style="left:1677px;top:477.57px;font-size:20px;line-height:20px;color:#fff;font-weight:700;text-shadow:0 1px 2px rgba(0,0,0,.6);letter-spacing:0.35px">Capacita Suas</div>
<div class="a" style="left:1392px;top:543px;width:243px;height:200px;border-radius:8px;overflow:hidden"><svg style="left:0;top:0" width="243" height="200" viewBox="0 0 243 200"><defs><linearGradient id="fbg" x1="0" x2="1" y1="0" y2="0"><stop offset="0" stop-color="#c6c3bf"/><stop offset="0.45" stop-color="#d7d4cf"/><stop offset="1" stop-color="#dedbd6"/></linearGradient><filter id="bl6" x="-20%" y="-20%" width="140%" height="140%"><feGaussianBlur stdDeviation="2.5"/></filter><filter id="bl1d" x="-30%" y="-30%" width="160%" height="160%"><feGaussianBlur stdDeviation="1.2"/></filter></defs><rect width="243" height="200" fill="url(#fbg)"/><g filter="url(#bl6)"><rect x="131" y="-5" width="22" height="20" fill="#cbbb8c"/><path d="M146 -5H174L176 35Q170 55 150 62L146 40z" fill="#b8bcc4"/><ellipse cx="100" cy="138" rx="33" ry="58" fill="#3b2f2b"/><ellipse cx="112" cy="118" rx="28" ry="36" fill="#a98173"/><path d="M76 135Q100 118 130 120Q140 150 132 180Q110 192 86 178Q72 160 76 135z" fill="#e3e2e5"/><path d="M158 120Q175 105 195 112Q198 135 188 150Q200 180 210 205H182Q172 170 165 152Q152 138 158 120z" fill="#b98b7d"/><rect x="190" y="108" width="18" height="32" fill="#b69e6f" transform="rotate(-10 199 124)"/><path d="M15 205Q50 185 130 190V205z" fill="#272424"/></g><g filter="url(#bl1d)"><rect x="88" y="102" width="26" height="24" rx="5" fill="none" stroke="#1a1412" stroke-width="3"/><rect x="118" y="106" width="28" height="26" rx="5" fill="none" stroke="#1a1412" stroke-width="3"/><path d="M75 140Q60 135 70 142" stroke="#e6e6e8" stroke-width="2" fill="none"/><circle cx="200" cy="125" r="2.5" fill="#3a3028"/><path d="M176 40Q182 80 185 118" stroke="#eeeeee" stroke-width="1.2" fill="none"/></g></svg></div>
<div class="a" style="left:1584.5px;top:555.5px;width:38px;height:38px;border-radius:50%;background:rgba(100,100,100,0.6)"></div>
<svg style="left:1590.5px;top:561.5px" width="26" height="26" viewBox="0 0 24 24"><path d="M19 11h-1.7c0 .74-.16 1.43-.43 2.05l1.23 1.23c.56-.98.9-2.09.9-3.28zm-4.02.17c0-.06.02-.11.02-.17V5c0-1.66-1.34-3-3-3S9 3.34 9 5v.18l5.98 5.99zM4.27 3L3 4.27l6.01 6.01V11c0 1.66 1.33 3 2.99 3 .22 0 .44-.03.65-.08l1.66 1.66c-.71.33-1.5.52-2.31.52-2.76 0-5.3-2.1-5.3-5.1H5c0 3.41 2.72 6.23 6 6.72V21h2v-3.28c.91-.13 1.77-.45 2.54-.9L19.73 21 21 19.73 4.27 3z" fill="#fff"/></svg>
<div class="t " style="left:1416px;top:696.07px;font-size:20px;line-height:20px;color:#fff;font-weight:700;text-shadow:0 1px 2px rgba(0,0,0,.6);letter-spacing:0.45px">francisca barreto ...</div>
<div class="a" style="left:1653px;top:543px;width:243px;height:200px;background:#3c4043;border-radius:8px;overflow:hidden">
</div>
<div class="a" style="left:1739px;top:606px;width:73px;height:73px;border-radius:50%;background:#000;overflow:hidden"><svg style="left:0;top:0" width="73" height="73" viewBox="0 0 73 73"><text x="0" y="0" font-family="Liberation Sans" font-weight="700" font-size="29" fill="#fff" stroke="#fff" stroke-width="0.8" text-anchor="middle" transform="translate(36.5,42) scale(0.72,1)">#FORA</text><text x="0" y="0" font-family="Liberation Sans" font-weight="700" font-size="16.5" fill="#fff" stroke="#fff" stroke-width="0.5" text-anchor="middle" transform="translate(36.5,55) scale(0.76,1)">BOLSONARO</text></svg></div>
<div class="a" style="left:1845.5px;top:555.5px;width:38px;height:38px;border-radius:50%;background:#2f3133"></div>
<svg style="left:1851.5px;top:561.5px" width="26" height="26" viewBox="0 0 24 24"><path d="M19 11h-1.7c0 .74-.16 1.43-.43 2.05l1.23 1.23c.56-.98.9-2.09.9-3.28zm-4.02.17c0-.06.02-.11.02-.17V5c0-1.66-1.34-3-3-3S9 3.34 9 5v.18l5.98 5.99zM4.27 3L3 4.27l6.01 6.01V11c0 1.66 1.33 3 2.99 3 .22 0 .44-.03.65-.08l1.66 1.66c-.71.33-1.5.52-2.31.52-2.76 0-5.3-2.1-5.3-5.1H5c0 3.41 2.72 6.23 6 6.72V21h2v-3.28c.91-.13 1.77-.45 2.54-.9L19.73 21 21 19.73 4.27 3z" fill="#fff"/></svg>
<div class="t " style="left:1671.5px;top:698.57px;font-size:20px;line-height:20px;color:#fff;font-weight:700;letter-spacing:0.05px">Anna Karina</div>
<div class="a" style="left:1392px;top:761px;width:243px;height:199px;background:#3c4043;border-radius:8px;overflow:hidden">
</div>
<div class="a" style="left:1477.5px;top:823.5px;width:73px;height:73px;border-radius:50%;background:#2eaa8b;overflow:hidden"><svg style="left:0;top:0" width="73" height="73" viewBox="0 0 73 73"><defs><filter id="cb"><feGaussianBlur stdDeviation="0.5"/></filter></defs><g filter="url(#cb)"><path d="M-2 24L36.5 1.5L75 24" fill="none" stroke="#f2f7f5" stroke-width="2.6"/><path d="M2 27L36.5 6.5L71 27" fill="none" stroke="#bfe3d8" stroke-width="0.8"/><circle cx="7" cy="26" r="2.2" fill="#d5484e"/><path d="M6 28V36H13L15 42" fill="none" stroke="#d5484e" stroke-width="2"/><circle cx="9" cy="39" r="4.5" fill="none" stroke="#d5484e" stroke-width="1.5"/><circle cx="19" cy="26" r="2.3" fill="#2c6aa8"/><rect x="15.8" y="29" width="6.4" height="8" rx="1.5" fill="#2c6aa8"/><rect x="16.8" y="36" width="4.4" height="7" fill="#2c6aa8"/><circle cx="27" cy="19" r="3" fill="#6bb33f"/><rect x="22.5" y="23" width="9" height="11" rx="2" fill="#6bb33f"/><rect x="23.8" y="33" width="6.4" height="10" fill="#6bb33f"/><circle cx="36" cy="18" r="3.2" fill="#f2b526"/><rect x="31.5" y="22" width="9" height="12" rx="2" fill="#f2b526"/><rect x="32.5" y="33" width="7" height="10" fill="#f2b526"/><circle cx="46" cy="19.5" r="2.8" fill="#f28a34"/><path d="M42 24H50L52.5 37H39.5z" fill="#f28a34"/><rect x="44.5" y="37" width="3" height="6" fill="#f28a34"/><circle cx="56" cy="20" r="2.8" fill="#e6479a"/><rect x="52.5" y="24" width="7" height="11" rx="2" fill="#e6479a"/><rect x="53.3" y="34" width="5.4" height="9" fill="#e6479a"/><circle cx="67" cy="22" r="2.6" fill="#c0393a"/><rect x="62" y="26" width="8" height="9" rx="2" fill="#c0393a"/><rect x="63" y="34" width="6" height="9" fill="#c0393a"/></g><text x="0" y="0" font-family="Liberation Sans" font-weight="700" font-size="20.5" fill="#fff" text-anchor="middle" transform="translate(39,62.2) scale(1.08,1)">CREAS</text><rect x="12" y="65" width="50" height="2" fill="#d8efe7" opacity="0.8"/><rect x="17" y="69" width="40" height="2" fill="#d8efe7" opacity="0.7"/></svg></div>
<div class="a" style="left:1585.0px;top:773.5px;width:38px;height:38px;border-radius:50%;background:#2f3133"></div>
<svg style="left:1591.0px;top:779.5px" width="26" height="26" viewBox="0 0 24 24"><path d="M19 11h-1.7c0 .74-.16 1.43-.43 2.05l1.23 1.23c.56-.98.9-2.09.9-3.28zm-4.02.17c0-.06.02-.11.02-.17V5c0-1.66-1.34-3-3-3S9 3.34 9 5v.18l5.98 5.99zM4.27 3L3 4.27l6.01 6.01V11c0 1.66 1.33 3 2.99 3 .22 0 .44-.03.65-.08l1.66 1.66c-.71.33-1.5.52-2.31.52-2.76 0-5.3-2.1-5.3-5.1H5c0 3.41 2.72 6.23 6 6.72V21h2v-3.28c.91-.13 1.77-.45 2.54-.9L19.73 21 21 19.73 4.27 3z" fill="#fff"/></svg>
<div class="t " style="left:1410.5px;top:915.82px;font-size:20.3px;line-height:20.3px;color:#fff;font-weight:700;letter-spacing:0.05px">CREAS NORONHA</div>
<div class="a" style="left:1653px;top:761px;width:243px;height:199px;background:#3c4043;border-radius:8px;overflow:hidden">
</div>
<div class="a" style="left:1730.5px;top:815px;width:48px;height:48px;border-radius:50%;overflow:hidden"><svg style="left:0;top:0" width="48" height="48" viewBox="0 0 48 48"><defs><filter id="ab"><feGaussianBlur stdDeviation="1.8"/></filter></defs><rect width="48" height="48" fill="#3c3a3c"/><g filter="url(#ab)"><rect x="-5" y="-5" width="58" height="20" fill="#b08a5a"/><rect x="0" y="14" width="12" height="17" fill="#3a86d6"/><rect x="28" y="20" width="6" height="14" fill="#2a9ad8"/><ellipse cx="26" cy="26" rx="11" ry="13" fill="#8c6650"/><ellipse cx="42" cy="30" rx="8" ry="13" fill="#9a7060"/><path d="M-5 38Q20 30 53 40V53H-5z" fill="#2a2c34"/></g></svg></div>
<div class="a" style="left:1775px;top:815px;width:49px;height:48px;border-radius:50%;overflow:hidden"><svg style="left:0;top:0" width="49" height="48" viewBox="0 0 49 48"><defs><filter id="ab2"><feGaussianBlur stdDeviation="1.3"/></filter><linearGradient id="rg" x1="0" x2="1"><stop offset="0" stop-color="#9e1c24"/><stop offset="1" stop-color="#cf3a48"/></linearGradient></defs><rect width="49" height="48" fill="url(#rg)"/><g filter="url(#ab2)"><path d="M13 50Q9 25 15 10Q24 2 33 8Q40 20 38 50z" fill="#4a2e22"/><ellipse cx="25" cy="21" rx="8" ry="11" fill="#dcae94"/><path d="M0 45Q8 32 20 34L25 50H0z" fill="#e6b090"/><path d="M34 36Q42 32 49 36V50H30z" fill="#f1e6e6"/><path d="M30 30Q36 40 32 50H24Q30 40 28 32z" fill="#6a4230"/></g></svg></div>
<div class="a" style="left:1639px;top:882px;width:233px;height:54px;background:#4a4d51;border-radius:13px"></div>
<div class="a" style="left:1651.0px;top:891.0px;width:36px;height:36px;border-radius:50%;background:#80868b"></div>
<svg style="left:1657.0px;top:897.0px" width="24" height="24" viewBox="0 0 24 24"><path d="M19 11h-1.7c0 .74-.16 1.43-.43 2.05l1.23 1.23c.56-.98.9-2.09.9-3.28zm-4.02.17c0-.06.02-.11.02-.17V5c0-1.66-1.34-3-3-3S9 3.34 9 5v.18l5.98 5.99zM4.27 3L3 4.27l6.01 6.01V11c0 1.66 1.33 3 2.99 3 .22 0 .44-.03.65-.08l1.66 1.66c-.71.33-1.5.52-2.31.52-2.76 0-5.3-2.1-5.3-5.1H5c0 3.41 2.72 6.23 6 6.72V21h2v-3.28c.91-.13 1.77-.45 2.54-.9L19.73 21 21 19.73 4.27 3z" fill="#e8eaed"/></svg>
<svg style="left:1700px;top:893px" width="34" height="32" viewBox="0 0 34 32"><path d="M4 7H22V25H4z" fill="none" stroke="#9aa0a6" stroke-width="3"/><path d="M22 13L30 7V25L22 19" fill="#9aa0a6"/><path d="M3 2L30 30" stroke="#9aa0a6" stroke-width="3"/></svg>
<div class="t " style="left:1749px;top:898.80px;font-size:21.5px;line-height:21.5px;color:#fff;font-weight:700;">Você</div>
<svg style="left:1836px;top:897px" width="24" height="24" viewBox="0 0 24 24"><path d="M13.5 1.5H22.5V10.5M22.5 1.5L1.5 22.5M1.5 13.5V22.5H10.5" fill="none" stroke="#fff" stroke-width="2.8"/></svg>
<div class="t " style="left:27.5px;top:1008.53px;font-size:23px;line-height:23px;color:#fff;font-weight:700;">10:54</div>
<div class="a" style="left:106.3px;top:1007px;width:1.7px;height:26px;background:#fff"></div>
<div class="t " style="left:126px;top:1008.53px;font-size:23px;line-height:23px;color:#fff;font-weight:700;letter-spacing:0.45px">hrf27lxi2x</div>
<div class="a" style="left:719px;top:990px;width:60px;height:60px;border-radius:30px;background:#ea4335"></div>
<div class="a" style="left:797px;top:990px;width:60px;height:60px;border-radius:30px;background:#ea4335"></div>
<div class="a" style="left:875px;top:990px;width:60px;height:60px;border-radius:30px;background:#3c4043"></div>
<div class="a" style="left:953px;top:990px;width:60px;height:60px;border-radius:30px;background:#3c4043"></div>
<div class="a" style="left:1031px;top:990px;width:60px;height:60px;border-radius:30px;background:#3c4043"></div>
<div class="a" style="left:1109px;top:990px;width:84px;height:60px;border-radius:30px;background:#ea4335"></div>
<svg style="left:735px;top:1006px" width="28" height="28" viewBox="0 0 24 24"><path d="M19 11h-1.7c0 .74-.16 1.43-.43 2.05l1.23 1.23c.56-.98.9-2.09.9-3.28zm-4.02.17c0-.06.02-.11.02-.17V5c0-1.66-1.34-3-3-3S9 3.34 9 5v.18l5.98 5.99zM4.27 3L3 4.27l6.01 6.01V11c0 1.66 1.33 3 2.99 3 .22 0 .44-.03.65-.08l1.66 1.66c-.71.33-1.5.52-2.31.52-2.76 0-5.3-2.1-5.3-5.1H5c0 3.41 2.72 6.23 6 6.72V21h2v-3.28c.91-.13 1.77-.45 2.54-.9L19.73 21 21 19.73 4.27 3z" fill="#e8eaed"/></svg>
<svg style="left:811px;top:1006px" width="32" height="28" viewBox="0 0 32 28"><path d="M4.5 6.5H21.5V22.5H4.5z" fill="none" stroke="#e8eaed" stroke-width="2.6"/><path d="M21 11.5L28 6.5V22L21 17" fill="#e8eaed"/><path d="M3 2.5L26 26" stroke="#ea4335" stroke-width="4"/><path d="M3 2.5L26 26" stroke="#e8eaed" stroke-width="2.4"/></svg>
<svg style="left:889px;top:1002px" width="32" height="36" viewBox="0 0 32 36"><path d="M12 17V5.5a2 2 0 0 1 4 0V16M16 15V3.5a2 2 0 0 1 4 0V16M20 15V5.5a2 2 0 0 1 4 0V17M24 16V9.5a2 2 0 0 1 4 0V22Q28 33.5 18 33.5Q11 33.5 8 27L3.5 18.5Q2.8 16.5 4.8 16Q6.5 15.6 7.8 17.5L12 23V17" fill="none" stroke="#fff" stroke-width="2.8" stroke-linejoin="round"/></svg>
<svg style="left:966px;top:1006px" width="34" height="28" viewBox="0 0 34 28"><rect x="1.5" y="1.5" width="31" height="25" rx="2" fill="none" stroke="#fff" stroke-width="3"/><path d="M17 6.5L24 13.5H20V20H14V13.5H10z" fill="#fff"/></svg>
<div class="a" style="left:1057.6px;top:1007.8000000000001px;width:6.8px;height:6.8px;border-radius:50%;background:#fff"></div>
<div class="a" style="left:1057.6px;top:1016.6px;width:6.8px;height:6.8px;border-radius:50%;background:#fff"></div>
<div class="a" style="left:1057.6px;top:1025.3999999999999px;width:6.8px;height:6.8px;border-radius:50%;background:#fff"></div>
<svg style="left:1132px;top:1011px" width="38" height="18" viewBox="0 0 38 18"><path d="M19 3.5C12 3.5 6 5.5 1.5 9.5c-.6.6-.6 1.5 0 2.1l3.5 3.9c.6.6 1.5.7 2.2.2l3.8-2.6c.5-.3.7-.9.7-1.5V8.5c2.3-.7 4.8-1 7.3-1s5 .3 7.3 1v3.1c0 .6.2 1.2.7 1.5l3.8 2.6c.7.5 1.6.4 2.2-.2l3.5-3.9c.6-.6.6-1.5 0-2.1C32 5.5 26 3.5 19 3.5z" fill="#fff"/></svg>
<svg style="left:1550px;top:1001px" width="38" height="38" viewBox="0 0 24 24"><path d="M11 7h2v2h-2zm0 4h2v6h-2zm1-9C6.48 2 2 6.48 2 12s4.48 10 10 10 10-4.48 10-10S17.52 2 12 2zm0 18c-4.41 0-8-3.59-8-8s3.59-8 8-8 8 3.59 8 8-3.59 8-8 8z" fill="#fff"/></svg>
<svg style="left:1620px;top:1004px" width="40" height="30" viewBox="0 0 40 30"><circle cx="16.5" cy="9.9" r="4.5" fill="none" stroke="#fff" stroke-width="4"/><path d="M22.53 4.95A6.1 6.1 0 1 1 22.53 14.85A7.8 7.8 0 0 0 22.53 4.95z" fill="#fff"/><path fill-rule="evenodd" d="M3.9 28.2V24.5C3.9 19.5 10 17.1 16.65 17.1S29.4 19.5 29.4 24.5V28.2zM8.3 24.9C9 22.5 12.5 21.3 16.65 21.3S24.3 22.5 25 24.9z" fill="#fff"/><path d="M29.8 17.6Q38.4 19.3 38.4 24.5V28.2H32.4V24.5Q32.4 20.3 29.8 17.6z" fill="#fff"/></svg>
<div class="a" style="left:1643px;top:977px;width:30px;height:30px;border-radius:50%;background:#5f6368"></div>
<div class="t " style="left:1647.2px;top:984.11px;font-size:17px;line-height:17px;color:#fff;font-weight:700;">35</div>
<svg style="left:1696px;top:1004px" width="34" height="33" viewBox="0 0 34 33"><path d="M3.25 24V4.5Q3.25 2.75 5 2.75H29.25Q31 2.75 31 4.5V21.5Q31 23.25 29.25 23.25H8" fill="none" stroke="#fff" stroke-width="3.5"/><path d="M1.5 21.5V31.2L9.8 23.2V21.5z" fill="#fff"/><rect x="7.7" y="7" width="19.1" height="2.8" fill="#fff"/><rect x="7.7" y="11.2" width="19.1" height="3.2" fill="#fff"/><rect x="7.7" y="15.8" width="13.3" height="2.8" fill="#fff"/></svg>
<svg style="left:1766.5px;top:1000.5px" width="38" height="38" viewBox="0 0 24 24"><path d="M12 2l-5.5 9h11L12 2zm0 3.84L13.93 9h-3.87L12 5.84zM17.5 13c-2.49 0-4.5 2.01-4.5 4.5s2.01 4.5 4.5 4.5 4.5-2.01 4.5-4.5-2.01-4.5-4.5-4.5zm0 7c-1.38 0-2.5-1.12-2.5-2.5s1.12-2.5 2.5-2.5 2.5 1.12 2.5 2.5-1.12 2.5-2.5 2.5zM3 21.5h8v-8H3v8zm2-6h4v4H5v-4z" fill="#fff"/></svg>
<svg style="left:1841px;top:1002px" width="32" height="36" viewBox="0 0 32 36"><path d="M16 2.5L3.5 7.5V17C3.5 25 9 31.5 16 33.5C23 31.5 28.5 25 28.5 17V7.5z" fill="none" stroke="#fff" stroke-width="3" stroke-linejoin="round"/><rect x="9.9" y="15.3" width="12.4" height="10.4" rx="1" fill="#fff"/><path d="M12.7 15.5V13.2a3.4 3.4 0 0 1 6.8 0V15.5" fill="none" stroke="#fff" stroke-width="2.2"/><circle cx="16.1" cy="20.5" r="1.3" fill="#202124"/></svg>
</body></html>
